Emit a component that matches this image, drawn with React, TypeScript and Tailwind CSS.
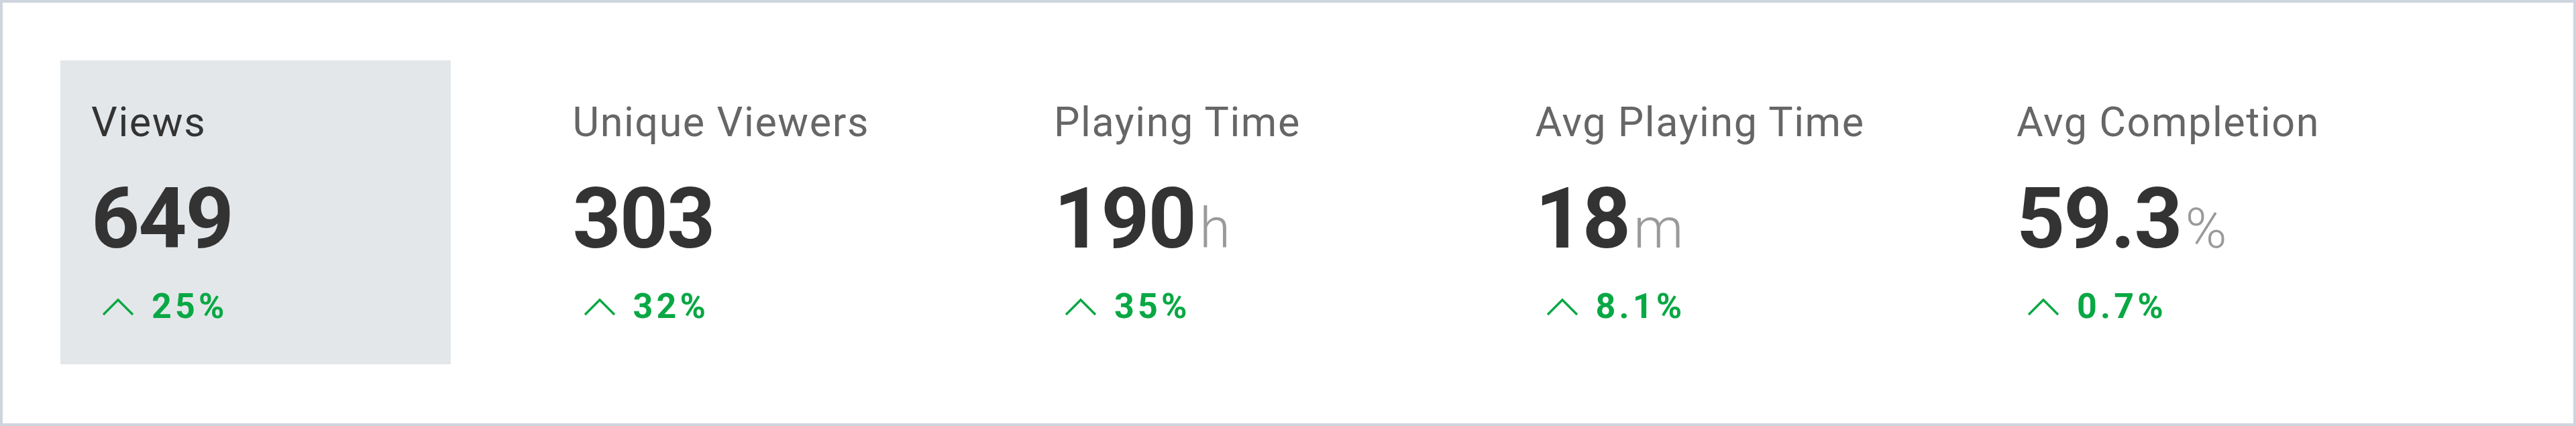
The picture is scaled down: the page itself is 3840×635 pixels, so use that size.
interface Metric {
  label: string;
  value: string;
  unit?: string;
  change: string;
}

const metrics: Metric[] = [
  { label: 'Views', value: '649', change: '25%' },
  { label: 'Unique Viewers', value: '303', change: '32%' },
  { label: 'Playing Time', value: '190', unit: 'h', change: '35%' },
  { label: 'Avg Playing Time', value: '18', unit: 'm', change: '8.1%' },
  { label: 'Avg Completion', value: '59.3', unit: '%', change: '0.7%' },
];

function ChevronUp() {
  return (
    <svg width="48" height="28" viewBox="0 0 48 28" fill="none" className="shrink-0">
      <polyline points="2,26 24,4 46,26" stroke="#0aa845" strokeWidth="3.4" strokeLinejoin="miter" />
    </svg>
  );
}

function MetricTile({ metric, active }: { metric: Metric; active: boolean }) {
  return (
    <div className={`w-[582px] h-[453px] pl-[46px] pt-[62px] ${active ? 'bg-[#e4e7ea]' : ''}`}>
      <div className={`text-[61px] leading-none tracking-[1.6px] ${active ? 'text-[#333333]' : 'text-[#666666]'}`}>
        {metric.label}
      </div>
      <div className="mt-[50px] flex items-baseline h-[126px]">
        <span className="text-[126px] leading-none font-bold text-[#333333] tracking-[-2px]">{metric.value}</span>
        {metric.unit && (
          <span className="ml-[6px] text-[84px] leading-none font-light text-[#9a9a9a]">{metric.unit}</span>
        )}
      </div>
      <div className="mt-[42px] pl-[16px] flex items-center gap-[26px] h-[52px]">
        <ChevronUp />
        <span className="text-[52px] leading-none font-bold text-[#0aa845] tracking-[0.1em]">{metric.change}</span>
      </div>
    </div>
  );
}

export default function App() {
  return (
    <div className="w-[3840px] h-[635px] bg-white border-4 border-[#cfd5dc] p-[86px] font-['Roboto',sans-serif]">
      <div className="flex gap-[135.5px]">
        {metrics.map((m, i) => (
          <MetricTile key={m.label} metric={m} active={i === 0} />
        ))}
      </div>
    </div>
  );
}
